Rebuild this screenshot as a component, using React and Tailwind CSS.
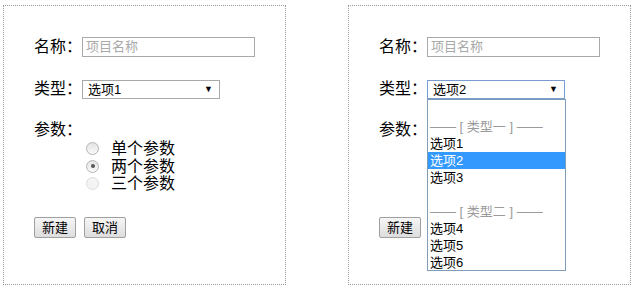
import React from "react";

const font = "font-['Liberation_Sans','Noto_Sans_CJK_SC',sans-serif]";

function Radio({ checked, disabled }) {
  return (
    <span
      className={`relative inline-block w-[13px] h-[13px] rounded-full border ${
        disabled ? "border-[#dcdcdc] bg-[#f4f4f4]" : "border-[#b5b5b5] bg-gradient-to-b from-[#e4e4e4] to-[#f8f8f8]"
      }`}
    >
      {checked && <span className="absolute left-[3.5px] top-[3.5px] w-[4px] h-[4px] rounded-full bg-[#555]" />}
    </span>
  );
}

function Button({ children, hidden }) {
  return (
    <button
      className={`w-[42px] h-[21px] border border-[#a0a0a0] rounded-[2px] bg-gradient-to-b from-[#f6f6f6] to-[#dddddd] text-[13px] leading-[19px] text-black ${
        hidden ? "invisible" : ""
      }`}
    >
      {children}
    </button>
  );
}

function Dropdown() {
  const rows = [
    { t: "", k: "b1" },
    { t: "—— [ 类型一 ] ——", g: true },
    { t: "选项1" },
    { t: "选项2", sel: true },
    { t: "选项3" },
    { t: "", k: "b2" },
    { t: "—— [ 类型二 ] ——", g: true },
    { t: "选项4" },
    { t: "选项5" },
    { t: "选项6" },
  ];
  return (
    <div className="absolute left-0 top-[19px] z-10 w-[139px] h-[172px] border border-[#7f9db9] bg-white pt-[1px]">
      {rows.map((r, i) => (
        <div
          key={r.k || r.t + i}
          className={`h-[17px] px-[2px] text-[13px] leading-[17px] whitespace-nowrap ${
            r.sel ? "bg-[#3399ff] text-white" : r.g ? "text-[#9a9a9a]" : "text-black"
          }`}
        >
          {r.t}
        </div>
      ))}
    </div>
  );
}

function Panel({ open }) {
  return (
    <div className="w-[283px] h-[280px] border border-dotted border-[#9a9a9a] pt-[31px] pl-[30px]">
      <div className="flex items-center h-[20px]">
        <span className="w-[48px] text-[16px] leading-[20px] text-black">名称：</span>
        <div className="w-[173px] h-[20px] border border-[#a9a9a9] px-[3px] text-[13px] leading-[18px] text-[#a9a9a9]">
          项目名称
        </div>
      </div>
      <div className="flex items-center h-[20px] mt-[22px]">
        <span className="w-[48px] text-[16px] leading-[20px] text-black">类型：</span>
        <div className="relative">
          <div
            className={`flex items-center justify-between w-[138px] h-[19px] border pl-[5px] pr-[6px] text-[13px] leading-[17px] text-black ${
              open ? "border-[#7a9bd0]" : "border-[#a9a9a9]"
            }`}
          >
            <span>{open ? "选项2" : "选项1"}</span>
            <span className="text-[9px]">▼</span>
          </div>
          {open && <Dropdown />}
        </div>
      </div>
      <div className="mt-[21px] h-[20px] text-[16px] leading-[20px] text-black">参数：</div>
      <div
        className={`flex flex-col pl-[52px] text-[16px] leading-[17.5px] text-black ${open ? "invisible" : ""}`}
      >
        <label className="flex items-center gap-[12px]">
          <Radio />
          <span>单个参数</span>
        </label>
        <label className="flex items-center gap-[12px]">
          <Radio checked />
          <span>两个参数</span>
        </label>
        <label className="flex items-center gap-[12px]">
          <Radio disabled />
          <span>三个参数</span>
        </label>
      </div>
      <div className="flex gap-[8px] mt-[24px]">
        <Button>新建</Button>
        <Button hidden={open}>取消</Button>
      </div>
    </div>
  );
}

export default function App() {
  return (
    <div className={`w-[637px] h-[293px] bg-white flex gap-[62px] pt-[5px] pl-[3px] ${font}`}>
      <Panel />
      <Panel open />
    </div>
  );
}
